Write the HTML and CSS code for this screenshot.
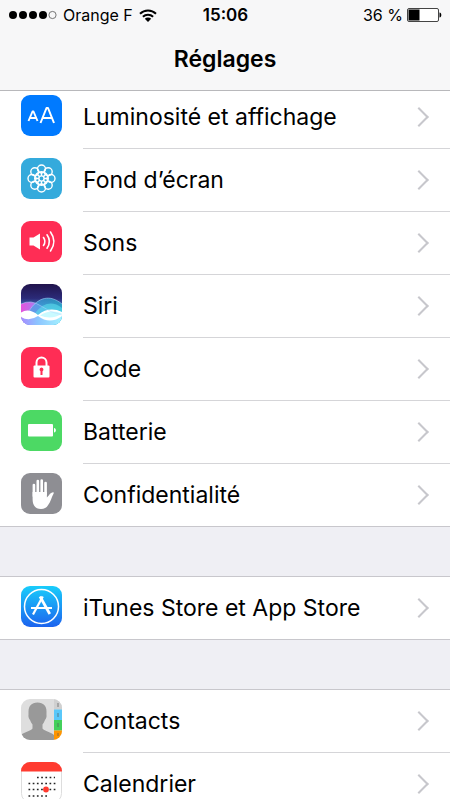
FILE: index.html
```html
<!DOCTYPE html>
<html lang="fr">
<head>
    <meta charset="UTF-8">
    <meta name="viewport" content="width=device-width, initial-scale=1.0">
    <title>Réglages</title>
    <link rel="stylesheet" href="styles.css">
</head>
<body>
    <header class="top-bar">
        <div class="status">
            <div class="status-left">
                <svg class="signal" viewBox="0 0 48 10" aria-hidden="true">
                    <circle cx="4" cy="5" r="4"/>
                    <circle cx="14" cy="5" r="4"/>
                    <circle cx="24" cy="5" r="4"/>
                    <circle cx="34" cy="5" r="4"/>
                    <circle cx="43.5" cy="5" r="3.6" fill="none" stroke="#555" stroke-width=".8"/>
                </svg>
                <span>Orange F</span>
                <svg class="wifi" viewBox="0 0 18 13" aria-hidden="true">
                    <path d="M1 4.7a11.5 11.5 0 0 1 16 0M3.9 7.7a7.4 7.4 0 0 1 10.2 0" fill="none" stroke="#000" stroke-width="2"/>
                    <path d="M9 13 5.8 9.8a4.6 4.6 0 0 1 6.4 0z"/>
                </svg>
            </div>
            <span class="time">15:06</span>
            <div class="status-right">
                <span>36 %</span>
                <svg class="battery" viewBox="0 0 35 14" aria-hidden="true">
                    <rect x=".5" y=".5" width="31" height="13" rx="1.5" fill="#fff" stroke="#444"/>
                    <rect x="1.5" y="1.5" width="11" height="11"/>
                    <path d="M32.5 4.5c2.4 0 2.4 5 0 5z"/>
                </svg>
            </div>
        </div>
        <h1>Réglages</h1>
    </header>

    <main>
        <nav class="group">
            <a class="row" href="#luminosite">
                <svg class="icon" viewBox="0 0 41 41" aria-hidden="true">
                    <rect width="41" height="41" rx="9" fill="#007aff"/>
                    <g fill="none" stroke="#fff" stroke-linejoin="round">
                        <path d="m7.500 26 4-9.500h1l4 9.500M9 23h6" stroke-width="1.900"/>
                        <path d="m19.500 28 6-15h1.500l6 15M21.500 23h9.500" stroke-width="2"/>
                    </g>
                </svg>
                <span class="label">Luminosité et affichage</span>
            </a>
            <a class="row" href="#fond">
                <svg class="icon" viewBox="0 0 41 41" aria-hidden="true">
                    <rect width="41" height="41" rx="9" fill="#34aadc"/>
                    <g fill="none" stroke="#fff" stroke-width="1.400">
                        <circle cx="20.500" cy="11" r="4"/>
                        <circle cx="27.200" cy="13.800" r="4"/>
                        <circle cx="30" cy="20.500" r="4"/>
                        <circle cx="27.200" cy="27.200" r="4"/>
                        <circle cx="20.500" cy="30" r="4"/>
                        <circle cx="13.800" cy="27.200" r="4"/>
                        <circle cx="11" cy="20.500" r="4"/>
                        <circle cx="13.800" cy="13.800" r="4"/>
                        <circle cx="20.500" cy="20.500" r="2.600"/>
                        <circle cx="20.500" cy="20.500" r="6.800"/>
                        <path d="M20.500 13.700v4.200M20.500 23.100v4.200M13.700 20.500h4.200M23.100 20.500h4.200M15.700 15.700l3 3M22.300 22.300l3 3M25.300 15.700l-3 3M18.700 22.300l-3 3"/>
                    </g>
                </svg>
                <span class="label">Fond d’écran</span>
            </a>
            <a class="row" href="#sons">
                <svg class="icon" viewBox="0 0 41 41" aria-hidden="true">
                    <rect width="41" height="41" rx="9" fill="#ff2d55"/>
                    <path d="M8.500 16.500h4l6.500-4v16l-6.500-4h-4z" fill="#fff"/>
                    <g fill="none" stroke="#fff" stroke-width="1.600" stroke-linecap="round">
                        <path d="M22.500 16.500q2.800 4 0 8"/>
                        <path d="M26 13.800q4.800 6.700 0 13.400"/>
                        <path d="M29.500 11q6.800 9.500 0 19"/>
                    </g>
                </svg>
                <span class="label">Sons</span>
            </a>
            <a class="row" href="#siri">
                <svg class="icon" viewBox="0 0 41 41" aria-hidden="true">
                    <defs>
                        <linearGradient id="siri-sky" x2="0" y2="1">
                            <stop offset="0" stop-color="#21144c"/>
                            <stop offset=".35" stop-color="#2b2a78"/>
                            <stop offset=".6" stop-color="#4a86d0"/>
                            <stop offset="1" stop-color="#9fe6fa"/>
                        </linearGradient>
                        <linearGradient id="siri-pink">
                            <stop offset="0" stop-color="#e653dc"/>
                            <stop offset=".45" stop-color="#9a86f4"/>
                            <stop offset="1" stop-color="#58a5f4" stop-opacity=".5"/>
                        </linearGradient>
                        <linearGradient id="siri-teal">
                            <stop offset="0" stop-color="#4f9cf0"/>
                            <stop offset="1" stop-color="#27b9cf"/>
                        </linearGradient>
                        <linearGradient id="siri-base">
                            <stop offset="0" stop-color="#a78bff"/>
                            <stop offset=".4" stop-color="#8cc4ff"/>
                            <stop offset="1" stop-color="#a4f2ff"/>
                        </linearGradient>
                        <clipPath id="siri-clip"><rect width="41" height="41" rx="9"/></clipPath>
                    </defs>
                    <g clip-path="url(#siri-clip)">
                        <rect width="41" height="41" fill="url(#siri-sky)"/>
                        <path d="M0 20q10-5 20 2t21 9v10H0z" fill="url(#siri-pink)"/>
                        <path d="M8 27C17 13 29 10 41 20v21H0v-6q4-1 8-8z" fill="url(#siri-teal)" opacity=".7"/>
                        <path d="M14 29q13-16 27-5v17H14z" fill="#5fe3ee" opacity=".55"/>
                        <path d="M0 32h41v9H0z" fill="url(#siri-base)"/>
                        <path d="M0 28.500q8-5 17 2.500 11-9 24-3v4q-12 9-24 0-9 6-17 1z" fill="#fff"/>
                        <path d="M19 31.500q10-7 22-2-10 7-22 2z" fill="#c9faff"/>
                        <path d="M0 20q10-5 20 2t21 9M8 27C17 13 29 10 41 20" fill="none" stroke="#b6d8ff" stroke-width=".7" opacity=".7"/>
                    </g>
                </svg>
                <span class="label">Siri</span>
            </a>
            <a class="row" href="#code">
                <svg class="icon" viewBox="0 0 41 41" aria-hidden="true">
                    <rect width="41" height="41" rx="9" fill="#ff2d55"/>
                    <path d="M15.500 19v-3.500a5 5 0 0 1 10 0V19" fill="none" stroke="#fff" stroke-width="2"/>
                    <rect x="12.500" y="18.500" width="16" height="12" rx="1" fill="#fff"/>
                    <path d="M20.500 20.500a2 2 0 0 1 1 3.700v3.800h-2v-3.800a2 2 0 0 1 1-3.700z" fill="#ff2d55"/>
                </svg>
                <span class="label">Code</span>
            </a>
            <a class="row" href="#batterie">
                <svg class="icon" viewBox="0 0 41 41" aria-hidden="true">
                    <rect width="41" height="41" rx="9" fill="#4cd964"/>
                    <rect x="7" y="14" width="25" height="12.500" rx="1" fill="#fff"/>
                    <path d="M33 18c2.500 0 2.500 4.500 0 4.500z" fill="#fff"/>
                </svg>
                <span class="label">Batterie</span>
            </a>
            <a class="row" href="#confidentialite">
                <svg class="icon" viewBox="0 0 41 41" aria-hidden="true">
                    <rect width="41" height="41" rx="9" fill="#8e8e93"/>
                    <g stroke="#fff" stroke-width="2.600" stroke-linecap="round" fill="none">
                        <path d="M12.900 23V12M16.800 20V8M20.700 20V7.500M24.600 21V10"/>
                    </g>
                    <path d="M11.600 19h14.300v5.500c2-1.500 3.200-5 6.300-5.200.8.100.7.900.3 1.500-2 3.200-2.700 8.200-5.500 11.500-1.600 2.500-3.700 3.700-7 3.700-6.300 0-8.400-4.500-8.400-10z" fill="#fff"/>
                </svg>
                <span class="label">Confidentialité</span>
            </a>
        </nav>

        <nav class="group">
            <a class="row" href="#stores">
                <svg class="icon" viewBox="0 0 41 41" aria-hidden="true">
                    <defs>
                        <linearGradient id="store" x2="0" y2="1">
                            <stop offset="0" stop-color="#19cdfb"/>
                            <stop offset="1" stop-color="#1c63ee"/>
                        </linearGradient>
                    </defs>
                    <rect width="41" height="41" rx="9" fill="url(#store)"/>
                    <g fill="none" stroke="#fff">
                        <circle cx="20.500" cy="20.500" r="17" stroke-width="1.500"/>
                        <path d="M10 22h21" stroke-width="2"/>
                        <path d="M21.800 10.500 12 28.500" stroke-width="2.200"/>
                        <path d="m19 10.500 9.800 17.500" stroke-width="2.700"/>
                    </g>
                </svg>
                <span class="label">iTunes Store et App Store</span>
            </a>
        </nav>

        <nav class="group">
            <a class="row" href="#contacts">
                <svg class="icon" viewBox="0 0 41 41" aria-hidden="true">
                    <defs><clipPath id="contact-clip"><rect width="41" height="41" rx="9"/></clipPath></defs>
                    <g clip-path="url(#contact-clip)">
                        <rect width="41" height="41" fill="#dedede"/>
                        <path d="M16.500 3.500c6 0 9 3.500 9 9 0 2-.1 3.500.1 4.500-.1 2-1 3-1.600 4-.8 2-1.700 3.500-2.500 4.500v4c2 3 9 3.500 11.500 6.500v5H0v-5c2.500-3 9.500-3.500 11.500-6.500v-4c-.8-1-1.700-2.500-2.500-4.500-.6-1-1.500-2-1.600-4 .2-1 .1-2.500.1-4.500 0-5.500 3-9 9-9z" fill="#999"/>
                        <rect x="33" width="8" height="10.500" fill="#d0d0d0"/>
                        <rect x="33" y="10.500" width="8" height="10.500" fill="#5ac8fa"/>
                        <rect x="33" y="21" width="8" height="10.500" fill="#43d05c"/>
                        <rect x="33" y="31.500" width="8" height="9.500" fill="#ff9500"/>
                        <path d="M37 4v4M37 14v4M37 24v4M37 34v3" stroke="#555" stroke-width="1.500" opacity=".45"/>
                    </g>
                </svg>
                <span class="label">Contacts</span>
            </a>
            <a class="row" href="#calendrier">
                <svg class="icon" viewBox="0 0 41 41" aria-hidden="true">
                    <rect x=".5" y=".5" width="40" height="40" rx="9" fill="#fff" stroke="#ddd"/>
                    <path d="M0 9a9 9 0 0 1 9-9h23a9 9 0 0 1 9 9v.5H0z" fill="#ff3b30"/>
                    <path d="M16 15.500h18M7.500 21.500h27M7.500 27.500h27M7.500 34h19" stroke="#222" stroke-width="1.700" stroke-dasharray="1.700 2.500"/>
                    <circle cx="25" cy="27.500" r="2.900" fill="#ff3b30"/>
                </svg>
                <span class="label">Calendrier</span>
            </a>
        </nav>
    </main>
</body>
</html>
```
FILE: styles.css
```css
* {
    box-sizing: border-box;
}

body {
    margin: 0;
    background: #efeff4;
    color: #000;
    font-family: Inter, "Liberation Sans", sans-serif;
}

/* Header stays above the list while it scrolls */
.top-bar {
    position: sticky;
    top: 0;
    z-index: 1;
    height: 91px;
    background: #f7f7f8;
    border-bottom: 1px solid #b8b8bb;
}

.status {
    display: grid;
    grid-template-columns: 1fr auto 1fr;
    align-items: center;
    height: 30px;
    padding: 0 8px 0 9px;
    font-size: 16px;
}

.status-left,
.status-right {
    display: flex;
    align-items: center;
    white-space: nowrap;
}

.status-left {
    gap: 6px;
}

.status-right {
    justify-content: flex-end;
    gap: 4px;
}

.time {
    font-size: 17px;
    font-weight: 600;
}

.signal {
    width: 48px;
    height: 10px;
}

.wifi {
    width: 18px;
    height: 13px;
}

.battery {
    width: 35px;
    height: 14px;
}

h1 {
    margin: 14px 0 0;
    font-size: 23px;
    line-height: 30px;
    font-weight: 600;
    text-align: center;
}

/* The list is scrolled a little under the header */
main {
    margin-top: -6px;
}

.group {
    margin-bottom: 49px;
    background: #fff;
    border: solid #c8c7cc;
    border-width: 1px 0;
}

.row {
    display: flex;
    align-items: center;
    gap: 21px;
    padding-left: 21px;
    color: inherit;
    text-decoration: none;
}

.icon {
    flex: none;
    width: 41px;
    height: 41px;
    margin-bottom: 4px;
}

.label {
    flex: 1;
    display: flex;
    align-items: center;
    justify-content: space-between;
    height: 63px;
    padding-right: 24px;
    border-bottom: 1px solid #d5d5d8;
    font-size: 23px;
}

.row:last-child .label {
    height: 62px;
    border-bottom: 0;
}

.label::after {
    content: "";
    width: 12px;
    height: 12px;
    border: solid #c7c7cc;
    border-width: 2px 2px 0 0;
    transform: rotate(45deg);
}
```
